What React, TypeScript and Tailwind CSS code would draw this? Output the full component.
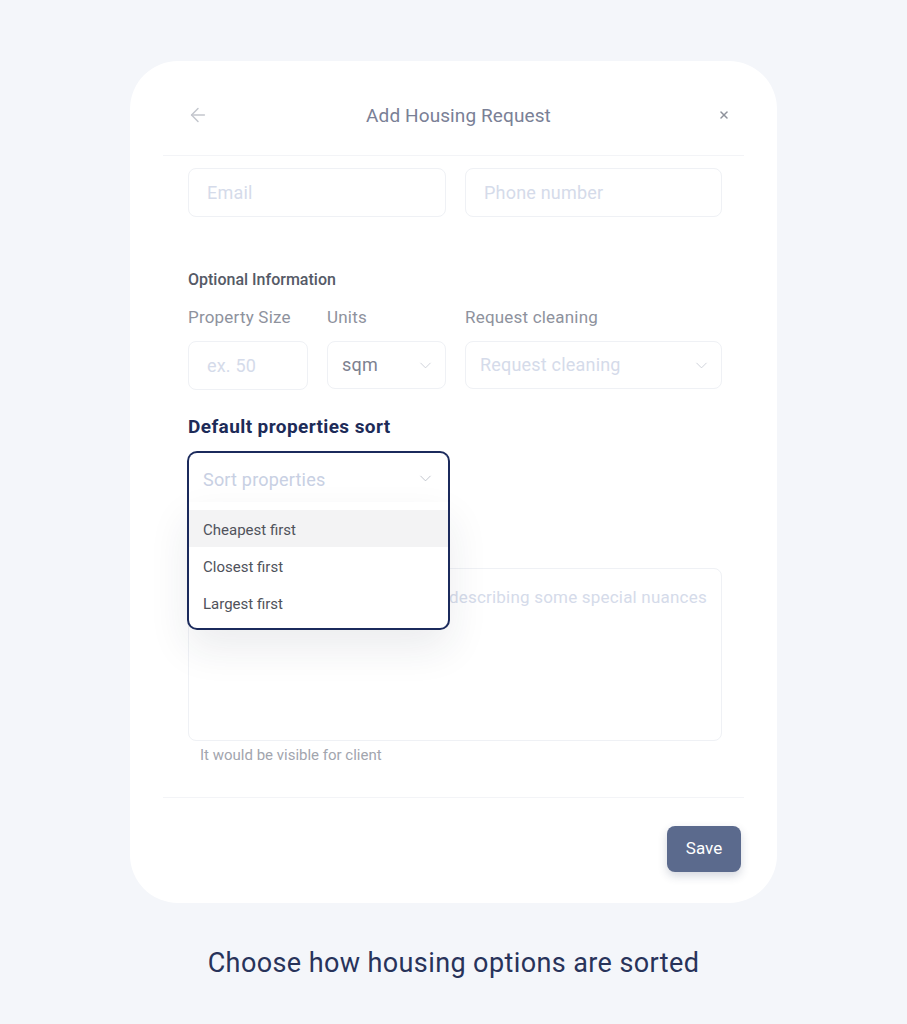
import { ArrowLeft, ChevronDown, X } from 'lucide-react';

const FONT = { fontFamily: 'Roboto, "Noto Sans", sans-serif' };

function Field({ placeholder, className = '' }: { placeholder: string; className?: string }) {
  return (
    <div
      className={`h-[49px] rounded-[8px] border border-[#eff1f5] flex items-center px-[18px] text-[18px] tracking-[0.2px] text-[#d5dbea] ${className}`}
    >
      {placeholder}
    </div>
  );
}

function SelectBox({
  value,
  muted,
  className = '',
}: {
  value: string;
  muted?: boolean;
  className?: string;
}) {
  return (
    <div
      className={`h-[48px] rounded-[8px] border border-[#eff1f5] flex items-center justify-between pl-[14px] pr-[10px] text-[18px] tracking-[0.2px] ${
        muted ? 'text-[#d5dbea]' : 'text-[#7d8190]'
      } ${className}`}
    >
      <span>{value}</span>
      <ChevronDown size={19} strokeWidth={1.1} className="text-[#c9ccd5]" />
    </div>
  );
}

const OPTIONS = ['Cheapest first', 'Closest first', 'Largest first'];

export default function App() {
  return (
    <div className="min-h-[1024px] bg-[#f4f6fa] pt-[61px]" style={FONT}>
      <div className="mx-auto w-[647px] h-[842px] rounded-[48px] bg-white flex flex-col">
        {/* Header */}
        <div className="h-[94px] pt-[16px] grid grid-cols-[1fr_auto_1fr] items-center pl-[57px] pr-[47px]">
          <ArrowLeft size={22} strokeWidth={1.6} className="text-[#c3c6cd] -mt-[2px]" />
          <span className="text-[19px] text-[#7a8096] tracking-[0.1px]">Add Housing Request</span>
          <X size={12} strokeWidth={3} className="text-[#8e929b] justify-self-end -mt-[3px]" />
        </div>
        <div className="mx-[33px] h-px bg-[#f3f4f7]" />

        <div className="pl-[58px] pr-[55px] flex flex-col">
          <div className="mt-[12px] flex gap-[19px]">
            <Field placeholder="Email" className="w-[258px]" />
            <Field placeholder="Phone number" className="flex-1" />
          </div>

          <div className="mt-[53px] text-[16px] leading-[20px] font-medium text-[#555a66]">
            Optional Information
          </div>

          <div className="mt-[17px] flex gap-[19px] text-[17px] leading-[20px] tracking-[0.2px] text-[#8e929d]">
            <div className="flex flex-col gap-[14px] w-[120px]">
              <span>Property Size</span>
              <Field placeholder="ex. 50" className="h-[48px] px-[14px]" />
            </div>
            <div className="flex flex-col gap-[14px] w-[119px]">
              <span>Units</span>
              <SelectBox value="sqm" />
            </div>
            <div className="flex flex-col gap-[14px] flex-1">
              <span>Request cleaning</span>
              <SelectBox value="Request cleaning" muted />
            </div>
          </div>

          <div className="mt-[25px] text-[19px] leading-[24px] font-bold tracking-[0.4px] text-[#1d2b58]">
            Default properties sort
          </div>

          {/* Open sort select */}
          <div className="relative z-10 mt-[12px] -ml-[1px] w-[263px]">
            <div className="h-[51px] rounded-t-[10px] border-[2.5px] border-b-0 border-[#1b2a5c] bg-white overflow-hidden">
              <div className="h-full pt-[4px] flex items-center justify-between pl-[14px] pr-[13px] text-[18px] tracking-[0.2px] text-[#c8d0e3] shadow-[0_3px_6px_rgba(0,0,0,0.06)]">
                <span>Sort properties</span>
                <ChevronDown size={19} strokeWidth={1.1} className="text-[#b9bdc7] -mt-[3px]" />
              </div>
            </div>
            <div className="absolute left-0 top-full w-full h-[128px] rounded-b-[10px] border-[2.5px] border-t-0 border-[#1b2a5c] bg-white pt-[8px] flex flex-col shadow-[0_18px_40px_rgba(30,40,70,0.09)]">
              {OPTIONS.map((opt, i) => (
                <div
                  key={opt}
                  className={`h-[37px] pt-[3px] flex items-center pl-[14px] text-[15px] text-[#4f525b] ${
                    i === 0 ? 'bg-[#f3f3f4]' : ''
                  }`}
                >
                  {opt}
                </div>
              ))}
            </div>
          </div>

          <div className="mt-[66px] h-[173px] rounded-[8px] border border-[#eff1f5] pl-[260px] pt-[16px] text-[17px] tracking-[0.2px] whitespace-nowrap text-[#d5dbea]">
            describing some special nuances
          </div>
          <div className="mt-[5px] pl-[12px] text-[15px] leading-[18px] text-[#a2a5ae]">
            It would be visible for client
          </div>
        </div>

        <div className="mx-[33px] mt-[33px] h-px bg-[#f3f4f7]" />

        <div className="flex justify-end pr-[36px] mt-[28px]">
          <button className="w-[74px] h-[46px] rounded-[8px] bg-[#5b6a8d] text-white text-[17px] shadow-[0_4px_10px_rgba(40,55,90,0.2)]">
            Save
          </button>
        </div>
      </div>

      <div className="mt-[40px] text-center text-[27px] tracking-[0.4px] text-[#28335a]">
        Choose how housing options are sorted
      </div>
    </div>
  );
}
